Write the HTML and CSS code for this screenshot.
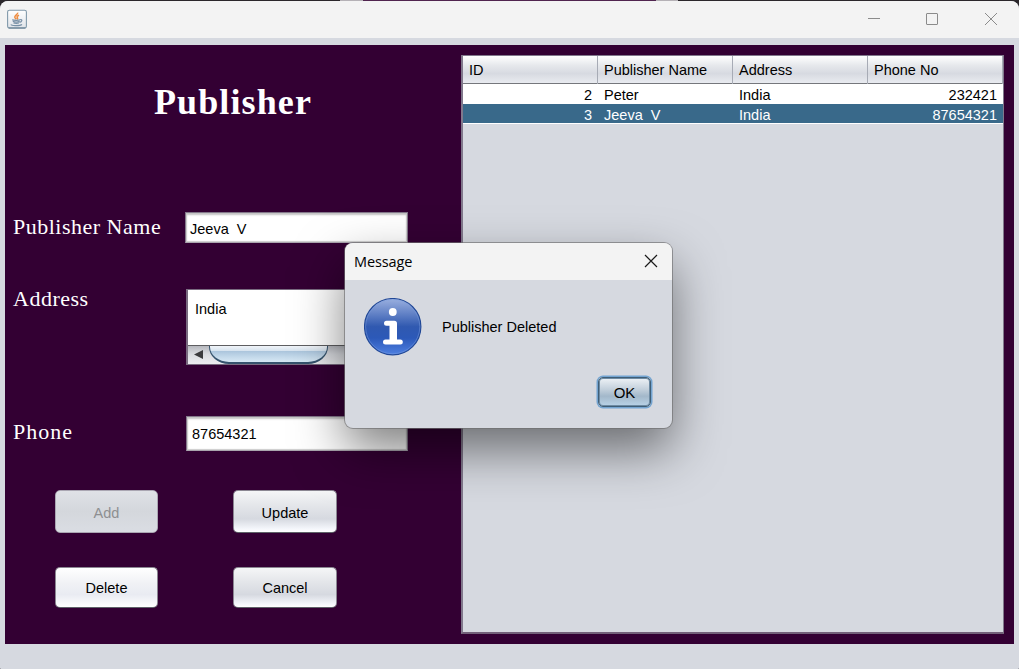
FILE: index.html
```html
<!DOCTYPE html>
<html lang="en">
<head>
<meta charset="utf-8">
<title>Publisher</title>
<link rel="stylesheet" href="styles.css">
</head>
<body>
<div class="desktop">
  <div class="backdrop-strip"><span class="strip-light"></span><span class="strip-purple"></span><span class="strip-light strip-short"></span></div>
  <main class="window">
    <header class="titlebar">
      <svg class="java-icon" width="20" height="20" viewBox="0 0 20 20">
        <defs><linearGradient id="tile" x1="0" y1="0" x2="0" y2="1"><stop offset="0" stop-color="#fff"/><stop offset="1" stop-color="#dfe3e8"/></linearGradient></defs>
        <rect x=".6" y="1.2" width="18.800" height="17.800" rx="1.800" fill="url(#tile)" stroke="#8199aa" stroke-width="1.100"/>
        <path d="M1.500 19h17" stroke="#58748a"/>
        <path d="M10.600 3.600c.8 1.800-3.400 2.700-2.800 4.700.3.900 1.100 1.400 1.400 2M12 6.200c-1.900.8-2.400 1.500-1.600 2.500.5.700.3 1.200-.2 1.700" fill="none" stroke="#ee8b3f" stroke-width="1.500"/>
        <path d="M5.200 10.800c1.500.7 6.400.7 8 0M5.800 12.400c1.800.6 5.200.6 6.800 0M6.500 14c1.600.5 4 .5 5.400 0M13.200 10.500c2.600-.3 1.900 2.300-.7 2.900M4.400 15.400c-1.600 1.500 8.600 1.700 10.600.1" fill="none" stroke="#7890a6" stroke-width="1.200"/>
      </svg>
      <svg class="window-controls" width="130" height="14" viewBox="0 0 130 14" fill="none" stroke="#8b8b8b">
        <path d="M0 7.500h12"/><rect x="58.500" y="2.500" width="11" height="11" rx=".5"/><path d="M117 2l12 12M129 2l-12 12"/>
      </svg>
    </header>
    <section class="panel">
      <form class="form">
        <h1 class="heading">Publisher</h1>
        <div class="row row-name"><label class="label label-name">Publisher Name</label><div class="field">Jeeva&nbsp; V</div></div>
        <div class="row row-address">
          <label class="label label-address">Address</label>
          <div class="textarea">
            <div class="textarea-text">India</div>
            <div class="scrollbar">
              <svg class="scroll-arrow" width="22" height="18" viewBox="0 0 22 18"><path d="M6 8.500l9-4.500v9z" fill="#3b3b3e"/></svg>
              <div class="thumb-clip"><div class="thumb"></div></div>
            </div>
          </div>
        </div>
        <div class="row row-phone"><label class="label label-phone">Phone</label><div class="field field-phone">87654321</div></div>
        <div class="buttons">
          <button type="button" class="button button-add" disabled>Add</button>
          <button type="button" class="button">Update</button>
          <button type="button" class="button button-delete">Delete</button>
          <button type="button" class="button button-cancel">Cancel</button>
        </div>
      </form>
      <div class="table">
        <div class="table-row table-head"><span class="cell">ID</span><span class="cell">Publisher Name</span><span class="cell">Address</span><span class="cell">Phone No</span></div>
        <div class="table-row"><span class="cell number">2</span><span class="cell">Peter</span><span class="cell">India</span><span class="cell number">232421</span></div>
        <div class="table-row selected"><span class="cell number">3</span><span class="cell">Jeeva&nbsp; V</span><span class="cell">India</span><span class="cell number">87654321</span></div>
      </div>
    </section>
  </main>
  <div class="dialog" role="dialog">
    <div class="dialog-title"><span>Message</span>
      <svg class="dialog-close" width="14" height="14" viewBox="0 0 14 14" fill="none" stroke="#191919" stroke-width="1.200"><path d="M1 1l12 12M13 1L1 13"/></svg>
    </div>
    <div class="dialog-body">
      <svg width="58" height="58" viewBox="0 0 58 58">
        <defs><linearGradient id="info" x1="0" y1="0" x2="0" y2="1"><stop offset="0" stop-color="#9bb0df"/><stop offset=".25" stop-color="#6685c8"/><stop offset=".5" stop-color="#3059b0"/><stop offset=".7" stop-color="#2c59b8"/><stop offset="1" stop-color="#4e80e2"/></linearGradient></defs>
        <circle cx="28.700" cy="28.700" r="28.200" fill="url(#info)" stroke="#204796" stroke-width="1.100"/>
        <circle cx="28.700" cy="28.700" r="27.100" fill="none" stroke="#7fa0e2" stroke-opacity=".55" stroke-width=".8"/>
        <circle cx="28.800" cy="14" r="3.900" fill="#fff"/>
        <path d="M22.500 22.700h7.800q2.700 0 2.700 2.700v16h3.300a2.500 2.500 0 0 1 0 5H21.500a2.500 2.500 0 0 1 0-5h4V27.700h-3a2.500 2.500 0 0 1 0-5z" fill="#fff"/>
      </svg>
      <span class="dialog-message">Publisher Deleted</span>
    </div>
    <div class="dialog-actions"><button type="button" class="ok">OK</button></div>
  </div>
</div>
</body>
</html>
```
FILE: styles.css
```css
* { box-sizing: border-box; }
body { margin: 0; overflow: hidden; font: 15px "Liberation Sans", Arial, sans-serif; color: #000; }
.desktop { position: relative; width: 1019px; height: 669px; background: #2b272b; }
.backdrop-strip { display: flex; height: 1px; padding-left: 340px; }
.strip-light { width: 23px; background: #b5b1b6; }
.strip-purple { width: 293px; background: #50244f; }
.strip-short { width: 22px; }
.window { height: 668px; border-radius: 8px 8px 1px 1px; background: #d6d9e0; overflow: hidden; }
.titlebar { display: flex; justify-content: space-between; height: 37px; padding: 8px 21px 0 7px; background: #f3f3f3; }
.window-controls { margin-top: 2px; }
.panel { display: flex; width: 1009px; height: 599px; margin: 7px 0 0 5px; padding: 10px 10px 10px 0; background: #330033; }
.form { width: 456px; color: #fff; font-family: "Liberation Serif", "Times New Roman", serif; }
.heading { margin: 23px 0 0; height: 48px; line-height: 48px; text-align: center; font-size: 36px; letter-spacing: 1.100px; }
.row { display: flex; align-items: flex-start; padding-left: 8px; }
.row-name { margin-top: 86px; }
.row-address { margin-top: 46px; }
.row-phone { margin-top: 51px; }
.label { width: 172px; height: 30px; line-height: 30px; font-size: 22px; letter-spacing: .500px; white-space: nowrap; }
.label-address, .label-phone { width: 173px; }
.label-address { margin-top: -5px; }
.label-phone { letter-spacing: 1px; padding-top: 1px; }
.field { width: 223px; height: 31px; padding: 1px 4px 0; border: 1px solid #84788b; border-bottom-color: #aaa5ae; background: #fff; box-shadow: inset 0 2px 2px #c4c4c4, inset 0 0 1px 1px #ccc; color: #000; font: 14.500px/30px "Liberation Sans", Arial, sans-serif; }
.field-phone { width: 222px; height: 35px; line-height: 33px; padding-left: 5px; }
.textarea { width: 221px; height: 76px; border: 2px solid #796b80; border-width: 1px 1px 1px 2px; background: #fff; color: #000; font: 14.500px "Liberation Sans", Arial, sans-serif; }
.textarea-text { height: 56px; padding: 11px 7px 0; line-height: 16px; border-bottom: 1px solid #5e5e61; }
.scrollbar { display: flex; height: 18px; background: linear-gradient(#b6b8be, #dadce1 45%, #edeef1); }
.thumb-clip { width: 119px; height: 18px; margin-left: -1px; overflow: hidden; }
.thumb { height: 34px; margin-top: -16px; border: 1.500px solid #35536d; border-bottom-width: 2px; border-radius: 20px / 17px; background: linear-gradient(#eef3f8 50%, #d8e4ef 63%, #abc5dc 65%, #c5daeb 85%, #d6e8f4); }
.buttons { display: grid; grid-template-columns: 103px 104px; grid-template-rows: 43px 41px; gap: 34px 75px; padding: 38.500px 0 0 50px; }
.button { margin: 0; padding: 3px 0 0; border: 1px solid #8b8792; border-bottom-color: #5e6268; border-radius: 5px; background: linear-gradient(#f5f6f7, #e4e6ea 35%, #d6d9e0 68%, #f4f6fb 92%, #fff); color: #000; font: 14.500px "Liberation Sans", Arial, sans-serif; }
.button-add { border-color: #aaa6b2; background: linear-gradient(#dfe1e6, #d4d7dc 50%, #dadde3); color: #8e8f91; }
.button-delete { background: linear-gradient(#fff, #f0f1f5 40%, #e9ebf2 68%, #fff); }
.button-delete, .button-cancel { padding-top: 1px; }
.table { width: 543px; height: 579px; border: 1px solid #81788c; border-left-width: 2px; border-bottom: 2px solid #726079; background: #d6d9e0; }
.table-row { display: grid; grid-template-columns: 135px 135px 135px 1fr; width: 540px; height: 20px; line-height: 22px; background: #fff; }
.table-head { height: 28px; line-height: 28px; border-bottom: 1px solid #75777c; background: linear-gradient(#fff, #e6e8ec 35%, #d7dae1 65%, #e9ebf0); }
.cell { padding: 0 6px; font-size: 14.500px; white-space: pre; }
.table-head .cell { border-right: 1px solid #a7abb5; }
.number { text-align: right; }
.selected { background: #39698a; border-bottom: 1px solid #fff; color: #fff; }
.dialog { position: absolute; left: 345px; top: 243px; width: 327px; height: 185px; border-radius: 8px; background: #d6d9e0; box-shadow: 0 0 0 1px rgba(110,110,112,.65), 0 22px 50px rgba(0,0,0,.5); }
.dialog-title { display: flex; align-items: center; justify-content: space-between; height: 37px; padding: 0 14px 0 9px; border-radius: 8px 8px 0 0; background: #f3f3f3; font: 14.500px "Open Sans", sans-serif; letter-spacing: -.1px; }
.dialog-close { margin-bottom: 2px; }
.dialog-body { display: flex; height: 76px; padding: 18px 0 0 19px; gap: 20px; align-items: flex-start; }
.dialog-message { line-height: 58px; font-size: 14.500px; }
.dialog-actions { display: flex; justify-content: flex-end; padding: 21px 21px 0 0; }
.ok { width: 53px; height: 30px; padding: 0; border: 1px solid #3f5e77; border-radius: 5px; background: linear-gradient(#eef2f6, #c3d0dc 40%, #a3b8ca 65%, #b9d3e8); box-shadow: inset 0 0 0 1px #6e8ba3, 0 0 0 1.500px #73a4d1; color: #000; font: 15px "Liberation Sans", Arial, sans-serif; }
```
